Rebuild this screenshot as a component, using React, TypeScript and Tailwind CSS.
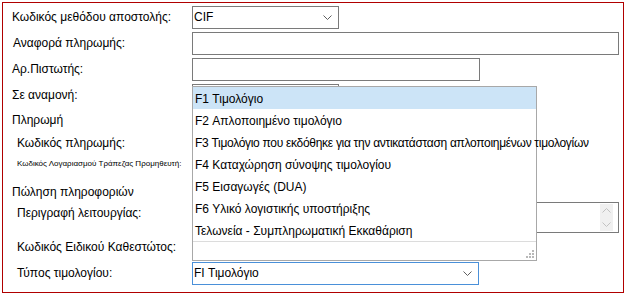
import React from "react";

const items = [
  "F1 Τιμολόγιο",
  "F2 Απλοποιημένο τιμολόγιο",
  "F3 Τιμολόγιο που εκδόθηκε για την αντικατάσταση απλοποιημένων τιμολογίων",
  "F4 Καταχώρηση σύνοψης τιμολογίου",
  "F5 Εισαγωγές (DUA)",
  "F6 Υλικό λογιστικής υποστήριξης",
  "Τελωνεία - Συμπληρωματική Εκκαθάριση",
];

function Chevron({ className = "" }: { className?: string }) {
  return (
    <svg width="9" height="5" viewBox="0 0 9 5" className={className}>
      <path d="M0.5 0.5 L4.5 4.5 L8.5 0.5" fill="none" stroke="#5f5f5f" strokeWidth="1" />
    </svg>
  );
}

function Select({ value, width, focused }: { value?: string; width: string; focused?: boolean }) {
  return (
    <div
      className={`${width} h-[23px] flex items-center bg-white border ${
        focused ? "border-[#4a90d9]" : "border-[#7a7a7a]"
      } pl-[1px] pr-[6px]`}
    >
      <span className="flex-1 whitespace-nowrap">{value}</span>
      <Chevron />
    </div>
  );
}

function Input({ width }: { width: string }) {
  return <div className={`${width} h-[23px] bg-white border border-[#7a7a7a]`} />;
}

function Label({ children, sub }: { children: React.ReactNode; sub?: boolean }) {
  return <div className={`w-[180px] shrink-0 whitespace-nowrap ${sub ? "pl-[5px]" : ""}`}>{children}</div>;
}

export default function App() {
  return (
    <div
      className="relative m-[2px] w-[622px] h-[291px] border border-[#b00000] bg-white text-[12px] leading-[15px] text-black pl-[9px]"
      style={{ fontFamily: '"Liberation Sans", Arial, sans-serif' }}
    >
      <div className="flex items-center h-[23px] mt-[3px]">
        <Label>Κωδικός μεθόδου αποστολής:</Label>
        <Select value="CIF" width="w-[147px]" />
      </div>
      <div className="flex items-center h-[23px] mt-[3px]">
        <Label>
          <span className="pl-[1px]">Αναφορά πληρωμής:</span>
        </Label>
        <Input width="w-[427px]" />
      </div>
      <div className="flex items-center h-[23px] mt-[3px]">
        <Label>Αρ.Πιστωτής:</Label>
        <Input width="w-[288px]" />
      </div>
      <div className="flex items-center h-[23px] mt-[3px]">
        <Label>Σε αναμονή:</Label>
        <Select width="w-[147px]" />
      </div>
      <div className="flex items-center h-[26px]">
        <Label>Πληρωμή</Label>
      </div>
      <div className="flex items-center h-[20px]">
        <Label sub>Κωδικός πληρωμής:</Label>
      </div>
      <div className="flex items-center h-[20px]">
        <Label sub>
          <span className="text-[8px]">Κωδικός Λογαριασμού Τράπεζας Προμηθευτή:</span>
        </Label>
      </div>
      <div className="flex items-center h-[19px] mt-[10px]">
        <Label>Πώληση πληροφοριών</Label>
      </div>
      <div className="flex items-start h-[31px]">
        <div className="pt-[4px]">
          <Label sub>Περιγραφή λειτουργίας:</Label>
        </div>
        <div className="w-[427px] h-[31px] bg-white border border-[#7a7a7a] flex justify-end p-[1px] pr-[5px]">
          <div className="w-[13px] h-[27px] bg-[#f0f0f0] flex flex-col items-center justify-around">
            <svg width="9" height="5" viewBox="0 0 9 5">
              <path d="M0.5 4.5 L4.5 0.5 L8.5 4.5" fill="none" stroke="#c2c2c2" strokeWidth="1" />
            </svg>
            <svg width="9" height="5" viewBox="0 0 9 5">
              <path d="M0.5 0.5 L4.5 4.5 L8.5 0.5" fill="none" stroke="#c2c2c2" strokeWidth="1" />
            </svg>
          </div>
        </div>
      </div>
      <div className="flex items-center h-[29px]">
        <Label sub>Κωδικός Ειδικού Καθεστώτος:</Label>
      </div>
      <div className="flex items-center h-[23px]">
        <Label sub>Τύπος τιμολογίου:</Label>
        <Select value="FI Τιμολόγιο" width="w-[287px]" focused />
      </div>

      {/* open dropdown list */}
      <div className="absolute left-[189px] top-[83px] w-[345px] h-[175px] bg-white border border-[#a8a8a8] flex flex-col">
        <div className="flex flex-col">
          {items.map((item, i) => (
            <div
              key={i}
              className={`h-[22px] flex items-center pl-[2px] pt-[3px] whitespace-nowrap ${
                i === 0 ? "bg-[#cce4f7]" : ""
              } ${i === 2 ? "tracking-[-0.3px]" : ""}`}
            >
              {item}
            </div>
          ))}
        </div>
        <div className="flex-1 border-t border-[#dcdcdc] flex items-end justify-end pr-[2px] pb-[2px]">
          <svg width="8" height="8" viewBox="0 0 8 8">
            <rect x="6" y="0" width="2" height="2" fill="#b8b8b8" />
            <rect x="3" y="3" width="2" height="2" fill="#b8b8b8" />
            <rect x="6" y="3" width="2" height="2" fill="#b8b8b8" />
            <rect x="0" y="6" width="2" height="2" fill="#b8b8b8" />
            <rect x="3" y="6" width="2" height="2" fill="#b8b8b8" />
            <rect x="6" y="6" width="2" height="2" fill="#b8b8b8" />
          </svg>
        </div>
      </div>
    </div>
  );
}
